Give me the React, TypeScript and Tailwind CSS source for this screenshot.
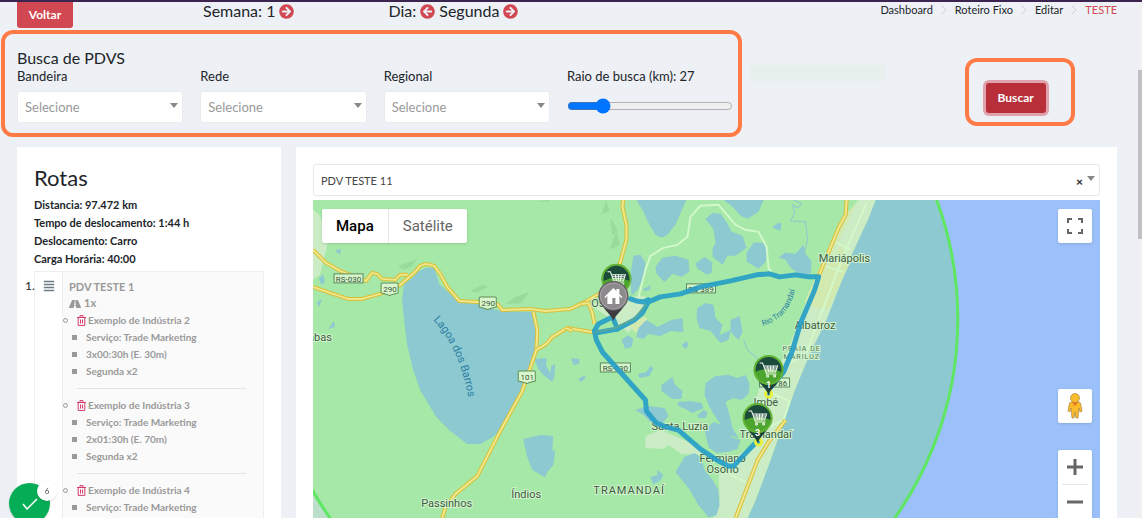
import React, { useState } from 'react';
import { FaAlignJustify, FaArrowCircleLeft, FaArrowCircleRight, FaRoad } from 'react-icons/fa';

interface Visit {
  name: string;
  details: string[];
}

const visits: Visit[] = [
  { name: 'Exemplo de Indústria 2', details: ['Serviço: Trade Marketing', '3x00:30h (E. 30m)', 'Segunda x2'] },
  { name: 'Exemplo de Indústria 3', details: ['Serviço: Trade Marketing', '2x01:30h (E. 70m)', 'Segunda x2'] },
  { name: 'Exemplo de Indústria 4', details: ['Serviço: Trade Marketing', '3x00:30h (E. 30m)', 'Segunda x2'] },
];

const summary = ['Distancia: 97.472 km', 'Tempo de deslocamento: 1:44 h', 'Deslocamento: Carro', 'Carga Horária: 40:00'];

const Caret = ({ className }: { className: string }) => (
  <svg viewBox="0 0 8 5" className={`pointer-events-none absolute h-[5px] w-2 fill-[#888] ${className}`}>
    <path d="M0 0h8L4 5z" />
  </svg>
);

const FilterSelect = ({ id, label }: { id: string; label: string }) => (
  <div className="pr-[17px]">
    <label htmlFor={id} className="block text-[13px] leading-4">{label}</label>
    <div className="relative mt-[7px]">
      <select id={id} className="h-8 w-full appearance-none rounded-[3px] border border-[#e9ebef] bg-white px-[7px] pt-[2px] text-[13px] text-[#999]">
        <option>Selecione</option>
      </select>
      <Caret className="right-[5px] top-3" />
    </div>
  </div>
);

const TrashIcon = () => (
  <svg viewBox="0 0 9 11" className="h-[11px] w-[9px] shrink-0" fill="none" stroke="#d63c68">
    <path d="M0 2.5h9M3 2.2V.6h3v1.6M1.2 2.8v7.6h6.6V2.8M3.5 4.5v4M5.5 4.5v4" />
  </svg>
);

const VisitItem = ({ visit, last }: { visit: Visit; last: boolean }) => (
  <li>
    <div className="flex h-[17px] items-center">
      <span className="size-[5px] rounded-full border border-[#999]" />
      <button aria-label={`Remover ${visit.name}`} className="ml-[9px] mr-[2px]"><TrashIcon /></button>
      {visit.name}
    </div>
    <ul className="pl-[9px]">
      {visit.details.map((detail) => (
        <li key={detail} className="flex h-[17px] items-center gap-[9px]">
          <span className="size-[5px] bg-[#999]" />
          {detail}
        </li>
      ))}
    </ul>
    {!last && <hr className="my-2 ml-[14px] border-[#e3e3e3]" />}
  </li>
);

const water = [
  '404,283 410,280 418,272 426,268 434,268 439,284 448,292 458,302 478,304 500,311 532,312 536,330 535,350 530,368 524,390 515,407 500,431 491,438 480,444 467,444 450,431 436,417 420,390 413,370 407,345 404,320 402,300',
  '636,200 686,200 675,225 667,235 661,238 655,235 648,223 643,212',
  '723,200 763,200 758,212 747,219 740,216 733,208',
  '705,219 712,213 720,214 727,224 731,232 742,236 746,248 735,256 727,256 722,265 712,257 712,249 715,243 713,230',
  '746,253 753,243 763,243 767,250 765,262 758,269 750,264 746,262',
  '772,227 778,223 781,224 780,231 774,229',
  '778,258 784,253 795,254 803,245 805,254 811,262 810,274 800,275 790,268 785,260',
  '655,267 662,258 675,256 688,260 689,272 681,277 672,274 664,282 656,274',
  '695,264 704,257 712,263 711,273 707,275 697,269',
  '633,256 640,255 645,263 643,278 637,290 631,296 630,275',
  '643,289 651,285 649,290 643,291',
  '697,308 705,303 713,305 715,318 722,325 719,335 730,330 728,340 720,343 710,331 699,328 696,318',
  '638,328 646,320 657,327 671,320 682,318 683,332 670,331 660,336 648,334 643,339 636,337',
  '621,340 628,335 633,339 631,347 625,349',
  '681,345 686,341 688,345 685,349',
  '730,320 739,316 742,332 738,340 730,332',
  '661,385 672,377 674,384 682,391 681,399 672,399 661,391',
  '638,374 646,372 650,366 653,368 649,376 639,378',
  '677,402 690,401 701,403 703,408 692,413 685,409 678,406',
  '697,415 703,410 707,412 705,418 698,418',
  '705,383 715,376 728,375 737,378 745,375 749,384 748,394 741,400 733,398 725,402 729,415 732,428 738,438 729,435 717,420 709,407 704,395',
  '635,410 647,406 664,408 668,416 662,423 650,422 643,415',
  '704,430 713,422 722,425 731,437 740,440 737,449 727,452 716,453 708,447',
  '675,472 684,457 694,453 701,458 704,470 713,481 718,490 719,505 716,515 708,517 698,505 689,489',
  '650,477 657,475 657,470 663,475 660,480 653,484',
  '534,359 546,358 546,366 550,373 551,366 555,364 554,377 552,382 543,375 538,369',
  '571,358 579,359 579,364 573,365',
  '578,379 583,376 586,377 581,382',
  '523,439 540,435 553,436 552,450 555,451 553,465 547,472 545,477 532,470 527,457',
  '335,251 341,249 340,255',
  '319,279 323,274 325,283 321,284',
  '317,302 322,299 319,307',
  '328,329 334,321 335,327',
];

const highways = [
  'M313 250 326 263 340 271 366 281 372 273 377 274 382 279 395 280 400 275 408 275',
  'M313 287 330 293 348 299 362 299 380 294 400 285 415 272 420 266 426 264 434 266 440 274 447 287 459 301 478 302 497 304 502 310 530 309 545 311 570 309 585 302 600 293 614 282',
  'M533 312 537 330 536 350 530 368 522 391 500 431 477 476 455 494 445 508 442 518 436 556',
  'M536 350 546 344 552 337 567 328 597 333',
  'M580 304 588 303 592 313 594 324M565 328 572 331',
  'M623 200 622 207 626 225 626 240 620 262 616 280',
  'M846 200 845 215 838 228 818 276',
  'M785 420 768 442 757 460 735 518 724 556',
];

const places = [
  { text: 'Mariápolis', x: 818, y: 262 },
  { text: 'Albatroz', x: 794, y: 329 },
  { text: 'Imbé', x: 753, y: 406 },
  { text: 'Tramandaí', x: 739, y: 438 },
  { text: 'Santa Luzia', x: 651, y: 430 },
  { text: 'Fermiano', x: 699, y: 462 },
  { text: 'Osório', x: 706, y: 473 },
  { text: 'Passinhos', x: 421, y: 507 },
  { text: 'Índios', x: 511, y: 498 },
  { text: 'Os', x: 591, y: 307 },
  { text: 'abas', x: 308, y: 341 },
];

const RoadSign = ({ x, y, w, text }: { x: number; y: number; w: number; text: string }) => (
  <g>
    <rect x={x} y={y} width={w} height="9" fill="#d5f3c9" stroke="#5a8a60" />
    <text x={x + w / 2} y={y + 8} textAnchor="middle" fontSize="8" fill="#38583b">{text}</text>
  </g>
);

const Shield = ({ x, y, text }: { x: number; y: number; text: string }) => (
  <g>
    <path transform={`translate(${x} ${y})`} d="M1 0h15q1 0 1 1v9l-4 1-4.500 1.500-4.500-1.500-4-1V1q0-1 1-1z" fill="#d9f5cc" stroke="#5f8f55" />
    <text x={x + 9} y={y + 9} textAnchor="middle" fontSize="8" fill="#38583b">{text}</text>
  </g>
);

const CartPin = ({ x, y, label }: { x: number; y: number; label?: string }) => (
  <g transform={`translate(${x} ${y})`}>
    <path d="M0 25C-2 19-7 16-10 11L-15 0H15L10 11C7 16 2 19 0 25z" fill="#1b4238" />
    <circle r="14" fill="#1c4b3c" />
    <path d="M-13 2a13 13 0 0 0 26 0q-13-6-26 0z" fill="#4ca52e" />
    <circle r="14" fill="none" stroke="#62b334" strokeWidth="2" />
    <g fill="none" stroke="#f4faf2">
      <path d="M-9-7h3l4 11H8M-5-4H9L7 2H-3M-4-2H8M-3 0H7M-1-4 0 2M2-4 2 2M5-4 4 2" />
      <circle cx="-1" cy="6" r="1" /><circle cx="6" cy="6" r="1" />
    </g>
    {label && <text y="18" textAnchor="middle" fontSize="9" fontWeight="700" fill="#fff">{label}</text>}
  </g>
);

const HomePin = () => (
  <g transform="translate(613 296)">
    <path d="M0 25C-2 19-7 16-10 11L-15 0H15L10 11C7 16 2 19 0 25z" fill="#3d3b3d" />
    <circle r="15" fill="#636163" />
    <circle r="13" fill="#8c8a8c" stroke="#aaa8aa" />
    <path d="M-9 1 0-8 3-5v-2h3v5l3 3-1 1-2-2v8H2V2h-3v6h-5V0l-2 2z" fill="#fff" />
  </g>
);

const RouteMap = () => (
  <svg viewBox="313 200 786 356" preserveAspectRatio="xMidYMid slice" className="size-full font-[Roboto,sans-serif]" role="img" aria-label="Mapa da rota">
    <rect x="0" y="0" width="1500" height="800" fill="#9cc0f9" />
    <path d="M0 0H875V200L868 218 851 255 825 322 810 352 795 388 789 405 784 420 770 460 755 500 747 518 735 556V800H0z" fill="#bbdfca" />
    <circle cx="612" cy="319" r="345" fill="#8cc9d0" />
    <clipPath id="radius"><circle cx="612" cy="319" r="345" /></clipPath>
    <g clipPath="url(#radius)">
      <path d="M0 0H875V200L868 218 851 255 825 322 810 352 795 388 789 405 784 420 770 460 755 500 747 518 735 556V800H0z" fill="#a5e8a7" />
      <g fill="#97dc9b">
        <path d="M398 266 414 261 418 258 411 267 403 270zM470 291 482 285 488 287 476 293zM505 304 515 297 529 292 521 303zM601 214 606 201 609 212zM610 218 617 230 612 236zM609 250 616 231 620 245zM536 202 548 200 549 202z" />
      </g>
      <path d="M858 200 838 224 815 277 806 300 797 325 787 350 776 370 760 385 753 405 765 435 745 450 718 468 719 500 700 556H735L747 518 755 500 770 460 784 420 789 405 795 388 810 352 825 322 851 255 868 218 875 200z" fill="#cbecc5" />
      <path d="M858 200 838 224 815 277 804 302 817 309 828 308 850 262 840 245 822 276 848 220 855 205z" fill="#d2e9b0" />
      <path d="M313 210 320 216 328 242 320 275 313 280zM645 436 660 430 679 438 700 447 700 455 681 454 668 445 663 449 645 448zM590 305 610 298 645 296 644 312 628 333 615 322z" fill="#cbecc5" />
      <path d="M628 325 645 316 648 322 635 333z" fill="#d2e9b0" />
      <g fill="#8cc9d0">
        {water.map((points) => <polygon key={points} points={points} />)}
      </g>
      <g fill="none" stroke="#8cc9d0">
        <path d="M793 200 801 204 797 208 792 205 794 214 790 221 805 222 807 240 804 252M743 340 747 350 755 357 762 366" />
      </g>
      <path d="M638 298 645 270 650 256 663 248 677 245 687 237 690 217 700 206 718 205 735 225 745 230 758 232 766 247 768 268 772 275M866 203 845 250 822 310 805 355 789 363M835 242 850 250M824 266 843 272M768 392 789 401 783 420 762 430M729 474 745 482" fill="none" stroke="#d3f8c9" strokeWidth="2" />
      {highways.map((d) => (
        <g key={d} fill="none" strokeLinejoin="round">
          <path d={d} stroke="#d9bf38" strokeWidth="4" />
          <path d={d} stroke="#eee88c" strokeWidth="2" />
        </g>
      ))}
    </g>
    <circle cx="612" cy="319" r="345" fill="none" stroke="#5fe663" strokeWidth="3" />

    <RoadSign x={334} y={274} w={29} text="RS-030" />
    <RoadSign x={686} y={284} w={29} text="RS-389" />
    <RoadSign x={600} y={363} w={30} text="RS-030" />
    <RoadSign x={759} y={378} w={30} text="RS-786" />
    <Shield x={381} y={283} text="290" />
    <Shield x={479} y={297} text="290" />
    <Shield x={518} y={371} text="101" />

    <g fill="#3d5c40" stroke="#d2f3ce" strokeWidth="2" paintOrder="stroke" fontSize="11">
      {places.map((place) => <text key={place.text} x={place.x} y={place.y}>{place.text}</text>)}
      <text x="593" y="494" letterSpacing="1">TRAMANDAÍ</text>
      <g fontSize="7" letterSpacing="1" fill="#4d7650">
        <text x="782" y="351">PRAIA DE</text>
        <text x="783" y="359">MARILUZ</text>
      </g>
    </g>
    <path id="lagoa" d="M433 320Q459 348 468 397" fill="none" />
    <path id="rio" d="M762 326Q790 318 795 286" fill="none" />
    <g fill="#2e7fa5">
      <text fontSize="11"><textPath href="#lagoa">Lagoa dos Barros</textPath></text>
      <text fontSize="8"><textPath href="#rio">Rio Tramandaí</textPath></text>
    </g>

    <g fill="none" stroke="#249ec8" strokeWidth="5" strokeLinejoin="round" strokeLinecap="round" opacity=".9">
      <path d="M613 319 617 329M648 300 643 302 636 301 630 299" />
      <path d="M595 333 617 329 634 320 642 313 648 302 660 297 680 294 700 287 730 281 756 275 769 274 779 277 795 275 808 277 818 277 814 290 800 323 792 350 783 372 770 387" />
      <path d="M612 317 598 324 594 331 596 340 602 352 645 400 646 411 656 423 666 427 678 430 700 449 718 461 728 466 733 466 748 450 757 441" />
    </g>
    <path d="M595 332 612 329 634 319 646 304" fill="none" stroke="#57a79d" strokeWidth="2" />
    <g fill="#229bc4" stroke="#e9f03b" strokeWidth="3">
      <circle cx="768" cy="394" r="3" />
      <circle cx="758" cy="442" r="3" />
    </g>
    <CartPin x={616} y={279} />
    <HomePin />
    <CartPin x={768} y={370} label="1" />
    <CartPin x={757} y={418} label="3" />
  </svg>
);

const mapControl = 'flex w-[34px] items-center justify-center rounded-[2px] bg-white shadow';

export default function App() {
  const [radius, setRadius] = useState(27);

  return (
    <div className="flex h-screen overflow-hidden border-t-2 border-[#3d2350] bg-[#edf0f5] font-[Lato,sans-serif] text-[#212529]">
      <main className="min-w-0 flex-1 pl-[17px] pr-[21px]">
        <header className="flex justify-between">
          <div className="flex gap-[130px]">
            <button className="h-[26px] w-14 rounded-b-[3px] bg-[#d24852] text-xs font-bold text-white">Voltar</button>
            <div className="flex h-[18px] items-center gap-[94px] text-base">
              <div className="flex items-center gap-1">
                Semana: 1
                <button aria-label="Próxima semana"><FaArrowCircleRight className="size-[15px] text-[#d24852]" /></button>
              </div>
              <div className="flex items-center gap-1">
                Dia:
                <button aria-label="Dia anterior"><FaArrowCircleLeft className="size-[15px] text-[#d24852]" /></button>
                Segunda
                <button aria-label="Próximo dia"><FaArrowCircleRight className="size-[15px] text-[#d24852]" /></button>
              </div>
            </div>
          </div>
          <nav className="flex h-4 items-center gap-[9px] text-[11px]">
            {['Dashboard', 'Roteiro Fixo', 'Editar'].map((item) => (
              <React.Fragment key={item}>
                <a href="#">{item}</a>
                <svg viewBox="0 0 4 8" className="h-2 w-1" fill="none" stroke="#ccd0d6"><path d="M0 0l4 4-4 4" /></svg>
              </React.Fragment>
            ))}
            <span className="text-[#d24852]">TESTE</span>
          </nav>
        </header>

        <section className="grid grid-cols-6 pt-5">
          <div className="relative col-span-4">
            <div className="pointer-events-none absolute -bottom-[14px] -left-4 -top-[18px] right-2 rounded-xl border-4 border-[#ff7a45]" />
            <h2 className="text-base leading-5">Busca de PDVS</h2>
            <div className="grid grid-cols-4">
              <FilterSelect id="bandeira" label="Bandeira" />
              <FilterSelect id="rede" label="Rede" />
              <FilterSelect id="regional" label="Regional" />
              <div className="pr-[17px]">
                <label htmlFor="raio" className="block whitespace-nowrap text-[13px] leading-4">Raio de busca (km): {radius}</label>
                <input
                  id="raio"
                  type="range"
                  min={10}
                  max={100}
                  value={radius}
                  onChange={(e) => setRadius(Number(e.target.value))}
                  className="mt-[14px] block w-full accent-[#0075ff]"
                />
              </div>
            </div>
          </div>
          <div className="mt-[17px] h-4 pr-12">
            <div className="h-full bg-[#e8f0ee]" />
          </div>
          <div className="-mb-1 flex items-start pl-[31px] pt-[10px]">
            <div className="rounded-xl border-4 border-[#ff7a45] pb-[9px] pl-[17px] pr-[25px] pt-[21px]">
              <button className="block h-[30px] w-[60px] rounded-[3px] bg-[#b82f39] text-xs font-bold text-white ring-3 ring-[#dfa3ae]">Buscar</button>
            </div>
          </div>
        </section>

        <div className="mt-6 flex items-start gap-[15px]">
          <section className="w-[24%] bg-white px-[17px] pb-4 pt-[19px]">
            <h2 className="text-[22px] leading-6">Rotas</h2>
            <div className="mt-[6px] text-[11px] font-bold leading-[18px]">
              {summary.map((line) => <p key={line}>{line}</p>)}
            </div>
            <ol className="mt-[3px]">
              <li className="relative flex border border-[#eee] text-[10px] font-bold text-[#999]">
                <span className="absolute -left-[10px] top-[6px] text-xs font-normal leading-4 text-[#212529]">1.</span>
                <div className="flex w-7 justify-center border-r border-[#eee] pt-[8px]">
                  <FaAlignJustify className="size-3 text-[#6b7c85]" />
                </div>
                <div className="min-w-0 flex-1 bg-[#fafafa] pr-[17px]">
                  <p className="pl-[6px] pt-[6px] text-[11px] leading-[17px]">PDV TESTE 1</p>
                  <p className="flex h-[17px] items-center gap-[3px] pl-[6px] text-[11px]"><FaRoad className="size-3" />1x</p>
                  <ul>
                    {visits.map((visit, i) => <VisitItem key={visit.name} visit={visit} last={i === visits.length - 1} />)}
                  </ul>
                </div>
              </li>
            </ol>
          </section>

          <section className="min-w-0 flex-1 bg-white p-[17px]">
            <div className="relative">
              <select aria-label="PDV" className="h-8 w-full appearance-none rounded-[3px] border border-[#e9e9e9] bg-white px-[7px] pt-[2px] text-[11px] text-[#444]">
                <option>PDV TESTE 11</option>
              </select>
              <button aria-label="Limpar" className="absolute right-[17px] top-3 text-xs font-black leading-3 text-[#333]">×</button>
              <Caret className="right-[5px] top-3" />
            </div>
            <div className="relative mt-1 h-[356px] overflow-hidden">
              <RouteMap />
              <div className="absolute left-[9px] top-[9px] flex h-[34px] rounded-[2px] bg-white font-[Roboto,sans-serif] text-[15px] shadow">
                <button className="border-r border-[#e6e6e6] px-[14px] font-medium text-black">Mapa</button>
                <button className="px-[14px] text-[#666]">Satélite</button>
              </div>
              <div className="absolute bottom-[37px] right-2 top-[9px] flex flex-col">
                <button aria-label="Tela cheia" className={`${mapControl} h-[34px]`}>
                  <svg viewBox="0 0 16 16" className="size-4" fill="none" stroke="#666" strokeWidth="2"><path d="M1 5V1h4M11 1h4v4M15 11v4h-4M5 15H1v-4" /></svg>
                </button>
                <button aria-label="Street View" className={`${mapControl} mt-auto h-[34px]`}>
                  <svg viewBox="0 0 16 26" className="h-[26px] w-4" fill="#fbbc2c" stroke="#a98545" strokeWidth=".7">
                    <path d="M4 9h8q1 0 1.500 1L15 18l-2 1-1-4-1 10H9l-1-6-1 6H5L4 15l-1 4-2-1 1.500-8Q3 9 4 9z" />
                    <circle cx="8" cy="5" r="4.500" />
                    <path d="M5 9.500h6L8 13z" fill="#e8741e" stroke="none" />
                  </svg>
                </button>
                <div className="mt-[27px] flex w-[34px] flex-col rounded-[2px] bg-white shadow">
                  <button aria-label="Aumentar zoom" className="flex h-[34px] items-center justify-center">
                    <svg viewBox="0 0 16 16" className="size-4" stroke="#666" strokeWidth="3"><path d="M0 8h16M8 0v16" /></svg>
                  </button>
                  <div className="mx-1 h-px bg-[#e6e6e6]" />
                  <button aria-label="Diminuir zoom" className="flex h-[34px] items-center justify-center">
                    <svg viewBox="0 0 16 16" className="size-4" stroke="#666" strokeWidth="3"><path d="M0 8h16" /></svg>
                  </button>
                </div>
              </div>
            </div>
          </section>
        </div>
      </main>

      <div className="w-1 bg-[#f1f1f1] pt-[68px]">
        <div className="h-[169px] bg-[#c1c1c1]" />
      </div>

      <button aria-label="Confirmar" className="fixed -bottom-[6px] left-[9px] flex size-[41px] items-center justify-center rounded-full bg-[#05ad56] shadow">
        <svg viewBox="0 0 16 12" className="h-3 w-4" fill="none" stroke="#fff" strokeWidth="1.500"><path d="M1 6l4 5L15 1" /></svg>
        <span className="absolute -right-[7px] -top-[2px] flex size-5 items-center justify-center rounded-full bg-white text-[8px] text-[#555] shadow">6</span>
      </button>
    </div>
  );
}
